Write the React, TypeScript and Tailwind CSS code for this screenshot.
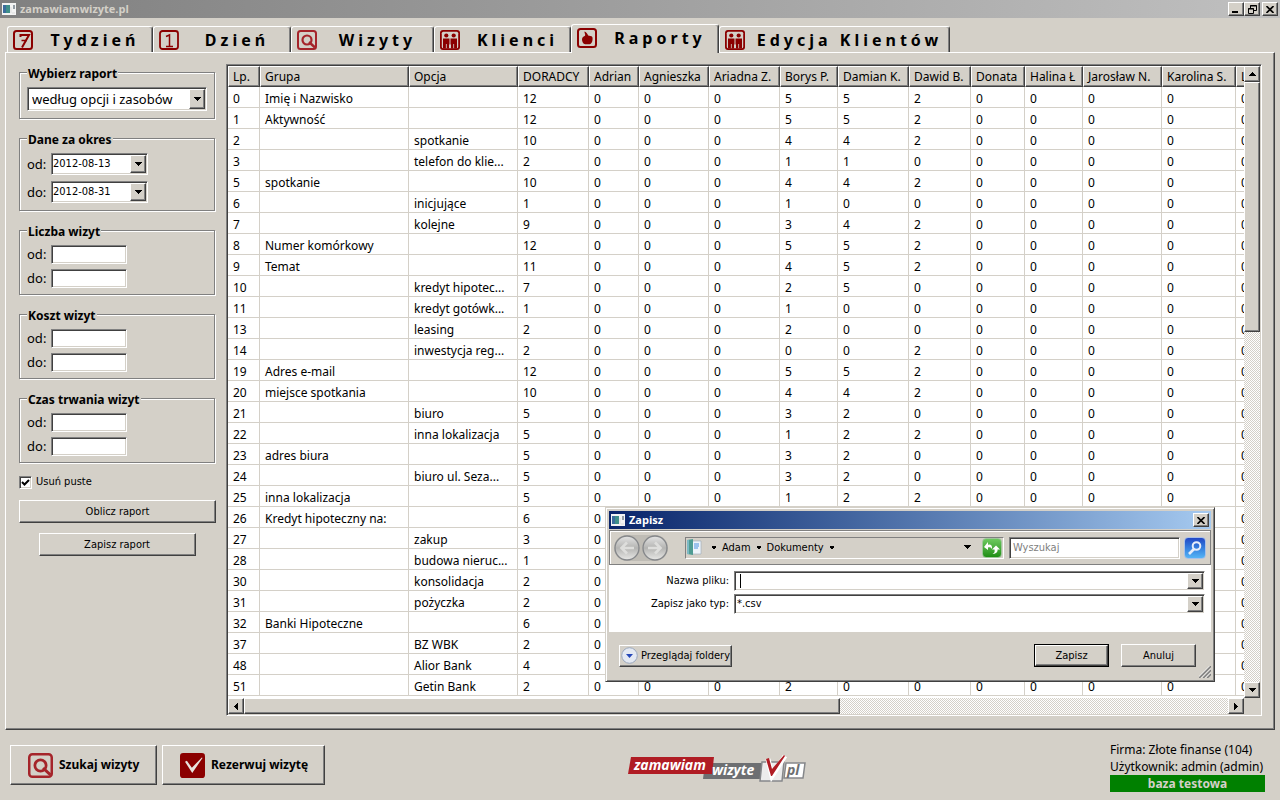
import React from "react";
import clsx from "clsx";

const raised = "border border-t-white border-l-white border-r-[#404040] border-b-[#404040] bg-[#d4d0c8] shadow-[inset_-1px_-1px_0_#808080]";
const sunken = "border border-t-[#808080] border-l-[#808080] border-r-white border-b-white shadow-[inset_1px_1px_0_#404040,inset_-1px_-1px_0_#d4d0c8] bg-white";
const uiFont = "font-['DejaVu_Sans_Condensed','DejaVu_Sans',sans-serif] text-[11px]";
const titleFont = "font-['Open_Sans','Noto_Sans',sans-serif] text-[11px] font-bold";
const dither = "bg-[repeating-conic-gradient(#ffffff_0_25%,#d4d0c8_0_50%)] bg-[length:2px_2px]";

function Arrow({ dir = "down", size = 7 }: { dir?: "up" | "down" | "left" | "right"; size?: number }) {
  const paths = {
    down: "M0 1h7L3.500 5z",
    up: "M0 5h7L3.500 1z",
    left: "M5 0v7L1 3.500z",
    right: "M1 0v7L5 3.500z",
  };
  return (
    <svg width={size} height={size} viewBox="0 0 7 7" shapeRendering="crispEdges" className="shrink-0" aria-hidden="true">
      <path d={paths[dir]} fill="#000" />
    </svg>
  );
}

function ArrowBox({ dir, className }: { dir?: "up" | "down" | "left" | "right"; className?: string }) {
  return <span className={clsx("flex w-4 shrink-0 items-center justify-center", raised, className)}><Arrow dir={dir} /></span>;
}

function Combo({ id, options, className, label }: { id: string; options: string[]; className?: string; label?: string }) {
  return (
    <div className={clsx("flex p-px", sunken, className)}>
      <select id={id} aria-label={label} className="min-w-0 flex-1 appearance-none bg-transparent outline-none">
        {options.map((o) => <option key={o}>{o}</option>)}
      </select>
      <ArrowBox />
    </div>
  );
}

function Group({ title, className, children }: { title: string; className: string; children: React.ReactNode }) {
  return (
    <fieldset className={clsx("min-w-0 border border-[#808080] px-[7px] pt-[7px] text-[13px] shadow-[inset_1px_1px_0_#fff,1px_1px_0_#fff]", className)}>
      <legend className="bg-[#d4d0c8] px-px pt-1 text-[12px] leading-3 font-bold">{title}</legend>
      {children}
    </fieldset>
  );
}

function RangeGroup({ title, name }: { title: string; name: string }) {
  return (
    <Group title={title} className="pb-1.5">
      <div className="flex flex-col gap-[5px]">
        {["od", "do"].map((l) => (
          <div key={l} className="flex items-center">
            <label htmlFor={`${name}-${l}`} className="w-6 leading-[19px]">{l}:</label>
            <input id={`${name}-${l}`} type="text" className={clsx("h-[19px] w-[76px] px-1 outline-none", sunken)} />
          </div>
        ))}
      </div>
    </Group>
  );
}

function TabIcon({ kind, size = 20 }: { kind: string; size?: number }) {
  return (
    <svg width={size} height={size} viewBox="0 0 20 20" className="shrink-0" aria-hidden="true">
      {kind === "seven" && (
        <g fill="none" stroke="#8b0000" strokeWidth="2">
          <rect x="1" y="1" width="18" height="18" rx="2.500" />
          <path d="M7.500 7V5h8.500L9 17.500" />
          <path d="M8.500 10.500h5.500" strokeWidth="1.500" />
        </g>
      )}
      {kind === "one" && (
        <g fill="none" stroke="#8b0000" strokeWidth="1.800">
          <rect x="1" y="1" width="18" height="18" rx="2.500" />
          <path d="M7 6.500 10.500 5v12M7 16.500h7" strokeWidth="1.500" />
        </g>
      )}
      {kind === "search" && (
        <g fill="none" stroke="#a5242a" strokeWidth="2">
          <rect x="1" y="1" width="18" height="18" rx="2.500" />
          <circle cx="10" cy="10" r="4.500" strokeWidth="2.200" />
          <path d="m12 12 6 5.500" strokeWidth="2.400" />
        </g>
      )}
      {kind === "people" && (
        <g>
          <rect width="20" height="20" rx="3" fill="#8b0000" />
          <rect x="1.800" y="1.800" width="16.400" height="16.400" rx="1.500" fill="#d4d0c8" />
          <circle cx="6.300" cy="5.500" r="2.100" fill="#8b0000" />
          <circle cx="13.700" cy="5.500" r="2.100" fill="#8b0000" />
          <path d="M3 8.500h6.500v6H9v4H6.700V14h-.8v4.500H3zM10.500 8.500H17v10h-2.900V14h-.8v4.500H11v-4h-.5z" fill="#8b0000" />
        </g>
      )}
      {kind === "hand" && (
        <g>
          <rect x="1" y="1" width="18" height="18" rx="2.500" fill="none" stroke="#8b0000" strokeWidth="2" />
          <path d="M7.500 3.500c1.500.4 3 2.300 3.700 4l3.300.8c1 .4 1.300 2 1 3.700-.2 2-1.200 4-2.800 4.300H8.200C6 16 5 13.500 5 11.500c0-2 1-3 3-3.800.8-1-.8-2.700-.5-4.200z" fill="#8b0000" />
        </g>
      )}
      {kind === "check" && (
        <g>
          <rect width="20" height="20" rx="2.500" fill="#8b0000" />
          <path d="m4 7 1.500-.8 4 5.600L17.500 3.500l.5.500-8.200 12z" fill="#e8e4de" />
        </g>
      )}
    </svg>
  );
}

function AppIcon() {
  return (
    <svg width="14" height="12" viewBox="0 0 14 12" className="shrink-0" aria-hidden="true">
      <rect width="14" height="12" fill="#f4f4f4" />
      <rect x="1" y="2" width="7" height="8" fill="#3f8f8a" />
      <rect x="1" y="2" width="3" height="8" fill="#3b6c9c" />
      <path d="M12 2v4" stroke="#345" />
      <path d="M9 4v6M10 10h3" stroke="#ddd" />
    </svg>
  );
}

function CloseIcon() {
  return <svg width="8" height="7" viewBox="0 0 8 7"><path d="m.5 0 7 7m0-7-7 7" stroke="#000" strokeWidth="1.600" /></svg>;
}

const tabs = [
  { label: "Tydzień", icon: "seven", width: "w-[146px]" },
  { label: "Dzień", icon: "one", width: "w-[138px]" },
  { label: "Wizyty", icon: "search", width: "w-[143px]" },
  { label: "Klienci", icon: "people", width: "w-[137px]" },
  { label: "Raporty", icon: "hand", width: "w-[148px]" },
  { label: "Edycja Klientów", icon: "people", width: "w-[231px]" },
];

const columns = [
  ["Lp.", 32], ["Grupa", 149], ["Opcja", 109], ["DORADCY", 71], ["Adrian", 50], ["Agnieszka", 70], ["Ariadna Z.", 71],
  ["Borys P.", 58], ["Damian K.", 71], ["Dawid B.", 62], ["Donata", 54], ["Halina Ł", 58], ["Jarosław N.", 79], ["Karolina S.", 74], ["Leszek", 60],
] as [string, number][];

// lp, grupa, opcja, doradcy, borys, damian, dawid
const rows: [number, string, string, number, number, number, number][] = [
  [0, "Imię i Nazwisko", "", 12, 5, 5, 2],
  [1, "Aktywność", "", 12, 5, 5, 2],
  [2, "", "spotkanie", 10, 4, 4, 2],
  [3, "", "telefon do klie...", 2, 1, 1, 0],
  [5, "spotkanie", "", 10, 4, 4, 2],
  [6, "", "inicjujące", 1, 1, 0, 0],
  [7, "", "kolejne", 9, 3, 4, 2],
  [8, "Numer komórkowy", "", 12, 5, 5, 2],
  [9, "Temat", "", 11, 4, 5, 2],
  [10, "", "kredyt hipotec...", 7, 2, 5, 0],
  [11, "", "kredyt gotówk...", 1, 1, 0, 0],
  [13, "", "leasing", 2, 2, 0, 0],
  [14, "", "inwestycja reg...", 2, 0, 0, 2],
  [19, "Adres e-mail", "", 12, 5, 5, 2],
  [20, "miejsce spotkania", "", 10, 4, 4, 2],
  [21, "", "biuro", 5, 3, 2, 0],
  [22, "", "inna lokalizacja", 5, 1, 2, 2],
  [23, "adres biura", "", 5, 3, 2, 0],
  [24, "", "biuro ul. Seza...", 5, 3, 2, 0],
  [25, "inna lokalizacja", "", 5, 1, 2, 2],
  [26, "Kredyt hipoteczny na:", "", 6, 2, 4, 0],
  [27, "", "zakup", 3, 1, 2, 0],
  [28, "", "budowa nieruc...", 1, 0, 1, 0],
  [30, "", "konsolidacja", 2, 1, 1, 0],
  [31, "", "pożyczka", 2, 1, 1, 0],
  [32, "Banki Hipoteczne", "", 6, 2, 4, 0],
  [37, "", "BZ WBK", 2, 1, 1, 0],
  [48, "", "Alior Bank", 4, 2, 2, 0],
  [51, "", "Getin Bank", 2, 2, 0, 0],
];

function ReportTable() {
  return (
    <div className={clsx("min-w-0 flex-1 self-start p-px", sunken)}>
      <div className="flex">
        <div className="h-[632px] min-w-0 flex-1 overflow-hidden">
          <table className="w-[1068px] table-fixed border-separate border-spacing-0 text-left">
            <colgroup>
              {columns.map(([name, width]) => <col key={name} style={{ width }} />)}
            </colgroup>
            <thead>
              <tr>
                {columns.map(([name]) => (
                  <th key={name} className={clsx("h-[21px] overflow-hidden p-0 pt-px pl-1 leading-[18px] font-normal whitespace-nowrap", raised)}>{name}</th>
                ))}
              </tr>
            </thead>
            <tbody>
              {rows.map(([lp, grupa, opcja, all, borys, damian, dawid]) => (
                <tr key={lp}>
                  {[lp, grupa, opcja, all, 0, 0, 0, borys, damian, dawid, 0, 0, 0, 0, 0].map((v, i) => (
                    <td key={i} className="h-[21px] overflow-hidden border-r border-b border-[#d4d0c8] p-0 pt-1 pl-[5px] leading-4 whitespace-nowrap">{v}</td>
                  ))}
                </tr>
              ))}
            </tbody>
          </table>
        </div>
        <div className={clsx("flex w-4 flex-col", dither)}>
          <ArrowBox dir="up" className="h-4" />
          <div className={clsx("h-[250px]", raised)} />
          <div className="flex-1" />
          <ArrowBox dir="down" className="h-4" />
        </div>
      </div>
      <div className="flex h-4">
        <div className={clsx("flex flex-1", dither)}>
          <ArrowBox dir="left" />
          <div className={clsx("w-[596px]", raised)} />
          <div className="flex-1" />
          <ArrowBox dir="right" />
        </div>
        <div className="w-4 bg-[#d4d0c8]" />
      </div>
    </div>
  );
}

function Sidebar() {
  return (
    <div className="flex w-[196px] shrink-0 flex-col gap-[11px]">
      <Group title="Wybierz raport" className="pb-[7px]">
        <Combo id="report" label="Wybierz raport" options={["według opcji i zasobów"]} className="h-6 w-[180px] pl-1" />
      </Group>
      <Group title="Dane za okres" className="pb-[7px]">
        <div className="flex flex-col gap-1.5">
          <div className="flex items-center">
            <label htmlFor="date-od" className="w-6">od:</label>
            <Combo id="date-od" options={["2012-08-13"]} className={clsx("h-[22px] w-[97px]", uiFont)} />
          </div>
          <div className="flex items-center">
            <label htmlFor="date-do" className="w-6">do:</label>
            <Combo id="date-do" options={["2012-08-31"]} className={clsx("h-[22px] w-[97px]", uiFont)} />
          </div>
        </div>
      </Group>
      <RangeGroup title="Liczba wizyt" name="count" />
      <RangeGroup title="Koszt wizyt" name="cost" />
      <RangeGroup title="Czas trwania wizyt" name="time" />
      <div className={clsx("flex flex-col gap-2.5", uiFont)}>
        <label className="flex h-4 items-center gap-1">
          <span className="grid size-[13px] place-items-center">
            <input type="checkbox" defaultChecked className={clsx("peer size-[13px] appearance-none [grid-area:1/1]", sunken)} />
            <svg width="9" height="9" viewBox="0 0 9 9" className="pointer-events-none invisible [grid-area:1/1] peer-checked:visible">
              <path d="m1 4 2.500 2.500L8 2" fill="none" stroke="#000" strokeWidth="2" />
            </svg>
          </span>
          Usuń puste
        </label>
        <button type="button" className={clsx("h-[23px] w-[197px]", raised)}>Oblicz raport</button>
        <button type="button" className={clsx("h-[23px] w-[157px] self-center", raised)}>Zapisz raport</button>
      </div>
    </div>
  );
}

function NavCircle({ back }: { back?: boolean }) {
  return (
    <button type="button" aria-label={back ? "Wstecz" : "Dalej"} className="size-[26px]">
      <svg width="26" height="26" viewBox="0 0 26 26">
        <defs>
          <linearGradient id={back ? "nb" : "nf"} x1="0" y1="0" x2="0" y2="1">
            <stop offset="0" stopColor="#e4e4e4" />
            <stop offset=".5" stopColor="#b4b4b2" />
            <stop offset="1" stopColor="#e8e8e6" />
          </linearGradient>
        </defs>
        <circle cx="13" cy="13" r="12" fill={`url(#${back ? "nb" : "nf"})`} stroke="#85878a" strokeWidth="1.300" />
        <path d={back ? "M20 13H8M13 7.500 7.500 13l5.500 5.500" : "M6 13h12M13 7.500l5.500 5.500-5.500 5.500"} fill="none" stroke="#dededc" strokeWidth="2.600" />
      </svg>
    </button>
  );
}

function SaveDialog() {
  return (
    <div role="dialog" aria-label="Zapisz" className={clsx("absolute top-[507px] left-[605px] w-[610px] border border-t-[#d4d0c8] border-l-[#d4d0c8] border-r-[#404040] border-b-[#404040] bg-[#d4d0c8] p-[3px] shadow-[inset_1px_1px_0_#fff,inset_-1px_-1px_0_#808080]", uiFont)}>
      <div className={clsx("flex h-[18px] items-center gap-1 bg-linear-to-r from-[#0a246a] to-[#a6caf0] px-0.5 text-white", titleFont)}>
        <AppIcon />
        <span className="flex-1">Zapisz</span>
        <button type="button" aria-label="Zamknij" className={clsx("flex h-3.5 w-4 items-center justify-center", raised)}>
          <CloseIcon />
        </button>
      </div>
      <div className="mt-px flex h-[35px] items-center border border-[#808080] px-1 shadow-[inset_1px_1px_0_#fff]">
        <div className="flex gap-0.5 rounded-full bg-[#bfbcb5]">
          <NavCircle back />
          <NavCircle />
        </div>
        <div className="ml-[17px] flex h-[22px] flex-1 items-center gap-[5px] border border-t-[#808080] border-l-[#808080] border-r-white border-b-white pr-px">
          <svg width="16" height="17" viewBox="0 0 16 17" className="mr-1">
            <path d="M5 2h10v13H5z" fill="#eef4fa" stroke="#9ab" strokeWidth=".6" />
            <path d="M8 5h5M8 7h5M8 9h4" stroke="#4a90e0" />
            <path d="m1 1 6-1v16l-6-1z" fill="#4f9c93" />
            <path d="M1 1h2v14H1z" fill="#7cb9c4" />
          </svg>
          <Arrow size={6} />
          <span>Adam</span>
          <Arrow size={6} />
          <span>Dokumenty</span>
          <Arrow size={6} />
          <span className="flex-1" />
          <Arrow />
          <button type="button" aria-label="Odśwież" className="ml-1.5 flex size-5 items-center justify-center rounded-sm border border-[#9fc79b] bg-linear-to-b from-[#6cc95e] to-[#1e8f12]">
            <svg width="18" height="16" viewBox="0 0 18 16" fill="#fff">
              <path d="M1 7 5 2v3c2-1 4 0 4 2.500V9C8 7.500 7 7 5 7.500V10z" />
              <path d="m9 9.500 4-4 4 4h-2.500c.5 2-1 4.500-5 4.500 2-1 2.500-2.500 2-4.500z" />
            </svg>
          </button>
        </div>
        <input type="text" aria-label="Wyszukaj" placeholder="Wyszukaj" className={clsx("ml-[5px] h-[22px] w-[171px] px-[3px] outline-none placeholder:text-[#808080]", sunken)} />
        <button type="button" aria-label="Szukaj" className="ml-1 flex size-[22px] items-center justify-center rounded-sm border border-[#a9c1e8] bg-linear-to-b from-[#2347c5] to-[#55b4f5]">
          <svg width="16" height="16" viewBox="0 0 16 16" fill="none" stroke="#e8eefa" strokeWidth="2"><circle cx="9.500" cy="6" r="3.800" /><path d="m7 9-5 5" strokeWidth="2.600" /></svg>
        </button>
      </div>
      <div className="grid h-[67px] grid-cols-[120px_1fr] content-start items-center gap-x-[5px] gap-y-[3px] bg-white pt-1.5 pr-1.5">
        <label htmlFor="file-name" className="text-right">Nazwa pliku:</label>
        <div className={clsx("flex p-px h-5", sunken)}>
          <span className="my-px ml-1 w-px bg-black" />
          <input id="file-name" type="text" className="min-w-0 flex-1 outline-none" />
          <ArrowBox />
        </div>
        <label htmlFor="file-type" className="text-right">Zapisz jako typ:</label>
        <Combo id="file-type" options={["*.csv"]} className="h-5 pl-0.5" />
      </div>
      <div className="relative flex items-center gap-3 pt-3 pr-[15px] pb-[11px] pl-2.5">
        <button type="button" className={clsx("flex h-[22px] w-[113px] items-center gap-[3px] pl-px whitespace-nowrap", raised)}>
          <svg width="17" height="17" viewBox="0 0 17 17" className="shrink-0"><circle cx="8.500" cy="8.500" r="7.800" fill="#e4e9f2" stroke="#9ba8bd" /><path d="M5 7h7l-3.500 4z" fill="#2447b8" /></svg>
          Przeglądaj foldery
        </button>
        <span className="flex-1" />
        <div className="border border-black">
          <button type="button" className={clsx("block h-[21px] w-[73px]", raised)}>Zapisz</button>
        </div>
        <button type="button" className={clsx("h-[23px] w-[75px]", raised)}>Anuluj</button>
        <svg width="12" height="12" viewBox="0 0 12 12" className="absolute right-0 bottom-0" aria-hidden="true">
          <path d="M0 12 12 0M4 12l8-8M8 12l4-4" stroke="#808080" strokeWidth="1.800" />
          <path d="M-1 11.500 11.500-1M2.500 12 12 2.500M6.500 12 12 6.500" stroke="#fff" strokeWidth=".8" />
        </svg>
      </div>
    </div>
  );
}

function Logo() {
  return (
    <svg width="180" height="30" viewBox="0 0 180 30" role="img" aria-label="zamawiamwizyte.pl" className="font-['Open_Sans','Noto_Sans',sans-serif] text-[14px] font-bold italic">
      <path d="M77 9h57l-2 16H75z" fill="#6d6f72" />
      <path d="M3 3h83l-2 17H0z" fill="#b01c24" />
      <path d="M158 9h19l-2 15h-19z" fill="#fff" stroke="#85878a" strokeWidth="1.500" />
      <path d="M134 8h22l-2 19h-22z" fill="#ececec" stroke="#85878a" strokeWidth="1.500" />
      <path d="m140 5 4 17L157 2" fill="none" stroke="#fff" strokeWidth="5" />
      <path d="m138 5 3-1 3 11L156 1l1 1-13 20h-1z" fill="#b01c24" />
      <text x="6" y="16" fill="#fff">zamawiam</text>
      <text x="84" y="21" fill="#fff">wizyte</text>
      <text x="159" y="21" fill="#6d6f72">pl</text>
    </svg>
  );
}

export default function App() {
  return (
    <div className="relative min-h-screen overflow-hidden bg-[#d4d0c8] font-['Noto_Sans',sans-serif] text-[12px] leading-4 text-black">
      <header className={clsx("flex h-[18px] items-center gap-1 bg-linear-to-r from-[#808080] to-[#c0c0c0] px-0.5 text-[#d4d0c8]", titleFont)}>
        <AppIcon />
        <h1 className="flex-1">zamawiamwizyte.pl</h1>
        <div className="flex">
          <button type="button" aria-label="Minimalizuj" className={clsx("flex h-3.5 w-4 items-center justify-center", raised)}>
            <svg width="8" height="8" viewBox="0 0 8 8"><path d="M0 6h6v2H0z" /></svg>
          </button>
          <button type="button" aria-label="Przywróć" className={clsx("flex h-3.5 w-4 items-center justify-center", raised)}>
            <svg width="9" height="9" viewBox="0 0 9 9" fill="none" stroke="#000"><path d="M2.500 3V.5h6v5H6M2 1h7" /><path d="M.5 3.500h5v5h-5zM0 4h6" /></svg>
          </button>
          <button type="button" aria-label="Zamknij" className={clsx("ml-0.5 flex h-3.5 w-4 items-center justify-center", raised)}>
            <CloseIcon />
          </button>
        </div>
      </header>

      <nav className="relative flex items-end pt-1.5 pl-[7px]">
        {tabs.map((t) => {
          const active = t.label === "Raporty";
          return (
            <button
              key={t.label}
              type="button"
              className={clsx(
                "flex items-center rounded-t-[3px] border border-b-0 border-t-white border-l-white border-r-[#404040] bg-[#d4d0c8] pl-[5px] text-[16px] font-bold shadow-[inset_-1px_0_0_#808080]",
                t.width,
                active ? "-mb-px h-[29px] pb-0.5" : "h-[26px]"
              )}
            >
              <TabIcon kind={t.icon} />
              <span className="flex-1 pl-[5px] tracking-[4px] whitespace-nowrap">{t.label}</span>
            </button>
          );
        })}
      </nav>

      <main className="mx-[5px] flex gap-[11px] border border-t-white border-l-white border-r-[#404040] border-b-[#404040] pt-[11px] pr-3 pb-[13px] pl-[13px] shadow-[inset_-1px_-1px_0_#808080]">
        <Sidebar />
        <ReportTable />
      </main>

      <footer className="flex items-start justify-between pt-[11px] pr-[15px] pl-2.5">
        <div className="flex gap-[5px] pt-1 font-bold">
          <button type="button" className={clsx("flex h-10 w-[147px] items-center gap-1.5 pl-[17px]", raised)}>
            <TabIcon kind="search" size={25} />
            Szukaj wizyty
          </button>
          <button type="button" className={clsx("flex h-10 w-[163px] items-center gap-1.5 pl-[17px]", raised)}>
            <TabIcon kind="check" size={25} />
            Rezerwuj wizytę
          </button>
        </div>
        <div className="pt-[13px]"><Logo /></div>
        <div className="w-[155px] leading-[17px] whitespace-nowrap">
          <p>Firma: Złote finanse (104)</p>
          <p>Użytkownik: admin (admin)</p>
          <p className="bg-[#008000] text-center font-bold text-[#d4d0c8]">baza testowa</p>
        </div>
      </footer>

      <SaveDialog />
    </div>
  );
}
